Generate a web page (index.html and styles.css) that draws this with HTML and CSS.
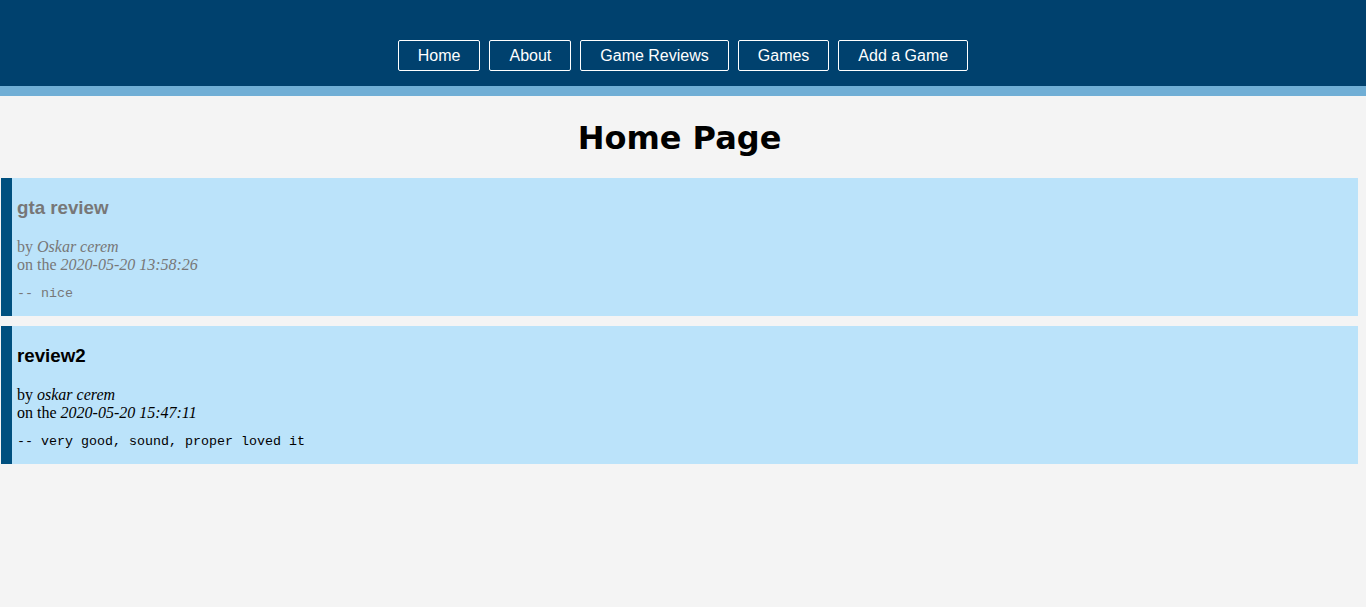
FILE: index.html
```html
<!DOCTYPE html>
<html>
<head>
<meta charset="utf-8">
<title>Home Page</title>
<link rel="stylesheet" href="styles.css">
</head>
<body>
<header class="site-header">
  <nav class="nav">
    <a class="nav-btn" href="#">Home</a>
    <a class="nav-btn" href="#">About</a>
    <a class="nav-btn" href="#">Game Reviews</a>
    <a class="nav-btn" href="#">Games</a>
    <a class="nav-btn" href="#">Add a Game</a>
  </nav>
</header>
<div class="stripe"></div>
<main class="content">
  <h1 class="page-title">Home Page</h1>
  <article class="review review-muted">
    <h3 class="review-title">gta review</h3>
    <p class="review-meta">by <em>Oskar cerem</em><br>on the <em>2020-05-20 13:58:26</em></p>
    <p class="review-body">-- nice</p>
  </article>
  <article class="review">
    <h3 class="review-title">review2</h3>
    <p class="review-meta">by <em>oskar cerem</em><br>on the <em>2020-05-20 15:47:11</em></p>
    <p class="review-body">-- very good, sound, proper loved it</p>
  </article>
</main>
</body>
</html>
```

FILE: styles.css
```css
html, body {
  margin: 0;
  padding: 0;
  background: #f4f4f4;
  font-family: "Liberation Serif", "Times New Roman", serif;
  font-size: 16px;
}

.site-header {
  background: #00416e;
  height: 86px;
  display: flex;
  justify-content: center;
  align-items: flex-start;
  box-sizing: border-box;
  padding-top: 40px;
}

.nav {
  display: flex;
  gap: 9px;
}

.nav-btn {
  display: block;
  box-sizing: border-box;
  height: 31px;
  line-height: 29px;
  padding: 0 19px;
  border: 1px solid #ffffff;
  border-radius: 2px;
  color: #ffffff;
  text-decoration: none;
  font-family: "Liberation Sans", Arial, sans-serif;
  font-size: 16px;
}

.stripe {
  height: 10px;
  background: #70aed5;
}

.content {
  display: flex;
  flex-direction: column;
  gap: 10px;
  padding: 0 8px 0 1px;
}

.page-title {
  margin: 24px 0 11px;
  text-align: center;
  font-family: "DejaVu Sans", Verdana, sans-serif;
  font-weight: bold;
  font-size: 32px;
  line-height: 37px;
  color: #000;
}

.review {
  background: #bbe3fa;
  border-left: 11px solid #00507f;
  padding: 1px 5px 0;
  color: #000;
}

.review-muted {
  color: #777777;
}

.review-title {
  margin: 18px 0 19px;
  font-family: "Liberation Sans", Arial, sans-serif;
  font-weight: bold;
  font-size: 18.72px;
  line-height: 22px;
}

.review-meta {
  margin: 0 0 12px;
  font-size: 16px;
  line-height: 18px;
}

.review-body {
  margin: 0 0 15px;
  font-family: "Liberation Mono", "Courier New", monospace;
  font-size: 13.33px;
  line-height: 15px;
}
```
